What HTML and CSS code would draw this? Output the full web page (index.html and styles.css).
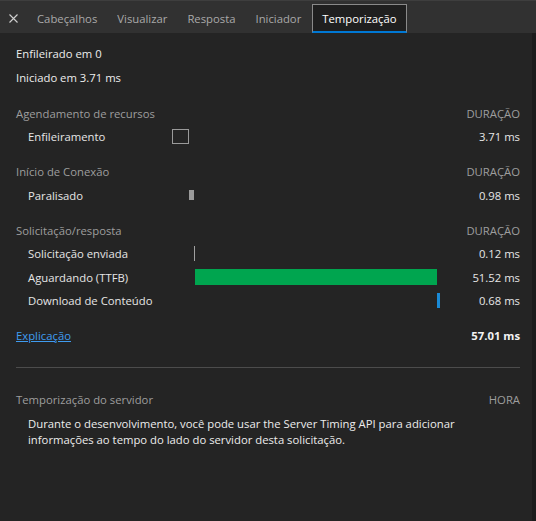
FILE: index.html
```html
<!DOCTYPE html>
<html lang="pt-BR">
<head>
<meta charset="utf-8">
<title>Temporização</title>
<link rel="stylesheet" href="styles.css">
</head>
<body>
<div class="panel">
  <div class="tabs">
    <div class="close">
      <svg width="9" height="9" viewBox="0 0 9 9"><path d="M0.5 0.5L8.5 8.5M8.5 0.5L0.5 8.5" stroke="#d0d0d0" stroke-width="1.1" fill="none"/></svg>
    </div>
    <div class="tab">Cabeçalhos</div>
    <div class="tab">Visualizar</div>
    <div class="tab">Resposta</div>
    <div class="tab">Iniciador</div>
    <div class="tab active">Temporização</div>
  </div>
  <div class="content">
    <div class="meta">Enfileirado em 0</div>
    <div class="meta">Iniciado em 3.71 ms</div>

    <div class="section">
      <div class="row head"><span class="head-title">Agendamento de recursos</span><span class="val">DURAÇÃO</span></div>
      <div class="row"><span class="label">Enfileiramento</span><span class="track"><span class="bar queue" style="margin-left:0%;width:6.3%"></span></span><span class="val">3.71 ms</span></div>
    </div>

    <div class="section">
      <div class="row head"><span class="head-title">Início de Conexão</span><span class="val">DURAÇÃO</span></div>
      <div class="row"><span class="label">Paralisado</span><span class="track"><span class="bar stalled" style="margin-left:6.5%;width:1.8%"></span></span><span class="val">0.98 ms</span></div>
    </div>

    <div class="section">
      <div class="row head"><span class="head-title">Solicitação/resposta</span><span class="val">DURAÇÃO</span></div>
      <div class="row"><span class="label">Solicitação enviada</span><span class="track"><span class="bar sent" style="margin-left:8.2%;width:0.37%"></span></span><span class="val">0.12 ms</span></div>
      <div class="row"><span class="label">Aguardando (TTFB)</span><span class="track"><span class="bar wait" style="margin-left:8.6%;width:90.2%"></span></span><span class="val">51.52 ms</span></div>
      <div class="row"><span class="label">Download de Conteúdo</span><span class="track"><span class="bar download" style="margin-left:98.8%;width:1.2%"></span></span><span class="val">0.68 ms</span></div>
    </div>

    <div class="row summary"><a class="link" href="#">Explicação</a><span class="val total">57.01 ms</span></div>

    <div class="divider"></div>

    <div class="server">
      <div class="server-head"><span>Temporização do servidor</span><span>HORA</span></div>
      <p class="server-text">Durante o desenvolvimento, você pode usar the Server Timing API para adicionar informações ao tempo do lado do servidor desta solicitação.</p>
    </div>
  </div>
</div>
</body>
</html>
```
FILE: styles.css
```css
html, body {
  margin: 0;
  padding: 0;
  background: #242424;
}
body {
  font-family: "Segoe UI", "Open Sans", "Noto Sans", sans-serif;
  font-size: 11.3px;
  color: #e6e6e6;
}
.panel {
  width: 536px;
  height: 521px;
  display: flex;
  flex-direction: column;
}
.tabs {
  height: 33px;
  box-sizing: border-box;
  display: flex;
  align-items: flex-end;
  background: #313131;
  border-top: 1px solid #3e3e3e;
}
.close {
  width: 27px;
  height: 29px;
  display: flex;
  align-items: center;
  justify-content: center;
}
.tab {
  height: 29px;
  box-sizing: border-box;
  padding: 0 9px;
  border: 1px solid transparent;
  border-bottom: 2px solid transparent;
  display: flex;
  align-items: center;
  color: #a9a9a9;
  white-space: nowrap;
}
.tab.active {
  background: #1f1f1f;
  color: #ffffff;
  border-color: #8a8a8a;
  border-bottom-color: #0078d4;
  margin-left: 1px;
}
.content {
  flex: 1;
  box-sizing: border-box;
  padding: 9px 12px 0 16px;
  border-right: 4px solid #1c1c1c;
}
.meta {
  height: 24px;
  line-height: 24px;
  color: #ededed;
}
.section {
  margin-top: 11px;
}
.row {
  display: grid;
  grid-template-columns: 156px 268px 80px;
  height: 23.5px;
  align-items: center;
}
.row.head {
  height: 24px;
}
.head-title {
  grid-column: 1 / 3;
  color: #9e9e9e;
}
.head .val {
  color: #9e9e9e;
}
.label {
  padding-left: 12px;
  white-space: nowrap;
}
.track {
  display: flex;
  align-items: center;
  height: 100%;
}
.val {
  text-align: right;
  white-space: nowrap;
}
.bar {
  display: block;
  flex: none;
}
.bar.queue {
  height: 15px;
  box-sizing: border-box;
  border: 1px solid #9a9a9a;
  min-width: 16px;
}
.bar.stalled {
  height: 10px;
  background: #9a9a9a;
}
.bar.sent {
  height: 15px;
  min-width: 1px;
  background: #a0a0a0;
}
.bar.wait {
  height: 16px;
  background: #00a54f;
}
.bar.download {
  height: 15px;
  min-width: 3px;
  background: #1a8ad6;
}
.summary {
  margin-top: 11px;
  height: 24px;
}
.link {
  grid-column: 1 / 3;
  color: #3f9cf0;
  text-decoration: underline;
  justify-self: start;
}
.total {
  font-weight: bold;
  color: #f2f2f2;
}
.divider {
  margin-top: 19px;
  height: 1px;
  background: #4c4c4c;
}
.server {
  margin-top: 20px;
}
.server-head {
  display: flex;
  justify-content: space-between;
  height: 24px;
  line-height: 24px;
  color: #9e9e9e;
}
.server-text {
  margin: 4px 0 0;
  padding-left: 12px;
  line-height: 16px;
  color: #ededed;
}
```
